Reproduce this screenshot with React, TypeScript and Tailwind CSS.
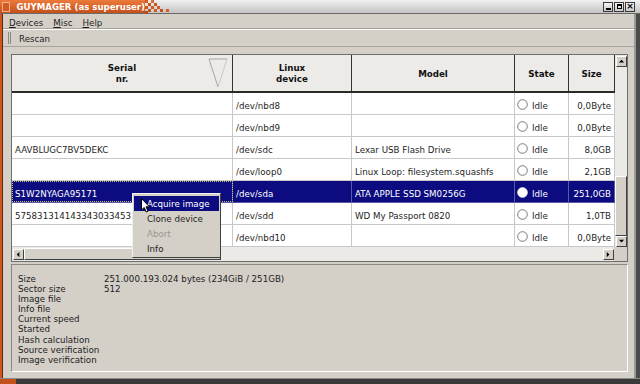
import React from "react";

const rows = [
  { serial: "", dev: "/dev/nbd8", model: "", size: "0,0Byte" },
  { serial: "", dev: "/dev/nbd9", model: "", size: "0,0Byte" },
  { serial: "AAVBLUGC7BV5DEKC", dev: "/dev/sdc", model: "Lexar USB Flash Drive", size: "8,0GB" },
  { serial: "", dev: "/dev/loop0", model: "Linux Loop: filesystem.squashfs", size: "2,1GB" },
  { serial: "S1W2NYAGA95171", dev: "/dev/sda", model: "ATA APPLE SSD SM0256G", size: "251,0GB", sel: true },
  { serial: "575831314143343033453", dev: "/dev/sdd", model: "WD My Passport 0820", size: "1,0TB" },
  { serial: "", dev: "/dev/nbd10", model: "", size: "0,0Byte" },
];

const info = [
  ["Size", "251.000.193.024 bytes (234GiB / 251GB)"],
  ["Sector size", "512"],
  ["Image file", ""],
  ["Info file", ""],
  ["Current speed", ""],
  ["Started", ""],
  ["Hash calculation", ""],
  ["Source verification", ""],
  ["Image verification", ""],
];

function Radio({ filled }: { filled?: boolean }) {
  return (
    <svg width="11" height="11" viewBox="0 0 11 11" className="shrink-0 mt-[2px]">
      <circle cx="5.5" cy="5.5" r="4.8" fill="#ffffff" stroke={filled ? "#ffffff" : "#6a6a6a"} strokeWidth="0.9" />
    </svg>
  );
}

function WinBtn({ children }: { children: React.ReactNode }) {
  return (
    <div className="w-[10px] h-[10px] border border-[#3a3a3a] bg-gradient-to-b from-[#f4f4f4] to-[#c8c8c8] flex items-center justify-center">
      {children}
    </div>
  );
}

function ArrowBtn({ dir }: { dir: "up" | "down" | "left" | "right" }) {
  const pts =
    dir === "up" ? "1,5 4,2 7,5" : dir === "down" ? "1,2 4,5 7,2" : dir === "left" ? "5,1 2,4 5,7" : "2,1 5,4 2,7";
  return (
    <div className="w-[11px] h-[11px] bg-[#d4d0c8] border border-t-white border-l-white border-r-[#404040] border-b-[#404040] flex items-center justify-center shrink-0">
      <svg width="7" height="7" viewBox="0 0 8 8">
        <polygon points={pts} fill="#000" />
      </svg>
    </div>
  );
}

export default function App() {
  return (
    <div className="w-[640px] h-[384px] overflow-hidden relative bg-[#303030] flex flex-col font-['DejaVu_Sans',sans-serif] text-[8.7px] text-[#1e1e1e]">
      {/* Title bar */}
      <div className="h-[14px] flex shrink-0 bg-gradient-to-b from-[#f0f0f0] to-[#c4c4c4] border-b border-[#6a6a6a]">
        <div className="w-[145px] flex items-center bg-gradient-to-b from-[#ec7a3c] to-[#c4501a] pl-[2px]">
          <div className="w-[10px] h-[10px] border border-[#f7b08a] bg-[#d45a22]" />
          <span className="ml-[6px] mt-[2px] font-bold text-white text-[8.6px] leading-none whitespace-nowrap">GUYMAGER (as superuser)</span>
        </div>
        <svg width="28" height="14" viewBox="0 0 28 14" className="shrink-0">
          <rect x="0" y="0" width="3" height="3" fill="#d45a22" />
          <rect x="3" y="3" width="3" height="3" fill="#c4501a" />
          <rect x="0" y="6" width="3" height="3" fill="#c95520" />
          <rect x="6" y="0" width="3" height="3" fill="#e06a30" />
          <rect x="6" y="6" width="3" height="3" fill="#d45a22" />
          <rect x="9" y="3" width="3" height="3" fill="#cc5520" />
          <rect x="12" y="6" width="3" height="3" fill="#d65c24" />
          <rect x="15" y="9" width="3" height="3" fill="#c4501a" />
          <rect x="9" y="9" width="3" height="3" fill="#d45a22" />
          <rect x="21" y="9" width="3" height="3" fill="#d86028" />
          <rect x="3" y="9" width="3" height="3" fill="#c4501a" />
          <rect x="0" y="11" width="3" height="3" fill="#b84a18" />
        </svg>
        <div className="flex-1" />
        <div className="flex items-center gap-[1px] pr-[5px]">
          <WinBtn>
            <div className="w-[5px] h-[2px] bg-black mt-[4px]" />
          </WinBtn>
          <WinBtn>
            <div className="w-[5px] h-[5px] border border-black border-t-2" />
          </WinBtn>
          <WinBtn>
            <span className="text-[9px] font-bold leading-none text-black">×</span>
          </WinBtn>
        </div>
      </div>

      {/* Window body */}
      <div className="flex flex-1 min-h-0">
        <div className="w-[3px] bg-[#d0561e] border-r border-[#5a2a10] shrink-0" />
        <div className="flex-1 bg-[#d4d0c8] flex flex-col min-w-0">
          {/* Menu bar */}
          <div className="h-[15px] flex items-center gap-[10px] pl-[6px] pt-[5px] border-b border-[#a8a49c] shrink-0">
            <span><u>D</u>evices</span>
            <span><u>M</u>isc</span>
            <span><u>H</u>elp</span>
          </div>
          {/* Toolbar */}
          <div className="h-[18px] flex items-center pt-[4px] border-t border-white border-b border-b-[#a8a49c] shrink-0">
            <div className="ml-[5px] -mt-[4px] h-[12px] w-[3px] border-l border-r border-[#8c887f]" />
            <span className="ml-[8px]">Rescan</span>
          </div>

          {/* Table */}
          <div className="mt-[7px] ml-[8px] mr-[6px] h-[208px] border border-[#6e6e6e] bg-white flex flex-col shrink-0">
            <div className="flex h-[192px]">
              <div className="w-[603px] flex flex-col">
                {/* Header */}
                <div className="h-[38px] flex bg-[#ecebe7] border-b-2 border-[#2a2a2a] font-bold text-[#111] text-center leading-[11px] shrink-0">
                  <div className="w-[221px] relative flex items-center justify-center pt-[2px] border-r border-[#333]">
                    <div>Serial<br />nr.</div>
                    <svg width="20" height="30" viewBox="0 0 20 30" className="absolute right-[4px] top-[3px]">
                      <polyline points="10,29 1,1 19,1" fill="none" stroke="#a4a4a4" strokeWidth="1" />
                      <line x1="10" y1="29" x2="19" y2="1" stroke="#c8c8c8" strokeWidth="1" />
                    </svg>
                  </div>
                  <div className="w-[119px] flex items-center justify-center pt-[2px] border-r border-[#333]">
                    <div>Linux<br />device</div>
                  </div>
                  <div className="w-[163px] flex items-center justify-center pt-[2px] border-r border-[#333]">Model</div>
                  <div className="w-[54px] flex items-center justify-center pt-[2px] border-r border-[#333]">State</div>
                  <div className="w-[46px] flex items-center justify-center pt-[2px] border-r border-[#333]">Size</div>
                </div>
                {/* Rows */}
                {rows.map((r, i) => {
                  const sel = !!r.sel;
                  const base = sel ? "bg-[#0c0c80] text-white" : "bg-white";
                  const line = sel ? "border-[#5a5aa0]" : "border-[#c8c8c8]";
                  return (
                    <div key={i} className={`h-[22px] flex shrink-0 border-b ${line} ${base}`}>
                      <div className={`w-[221px] flex items-center pt-[6px] pl-[3px] border-r ${line} overflow-hidden whitespace-nowrap ${sel ? "outline outline-1 outline-dotted outline-[#c8c070] -outline-offset-1" : ""}`}>
                        {r.serial}
                      </div>
                      <div className={`w-[119px] flex items-center pt-[6px] pl-[3px] border-r ${line} whitespace-nowrap`}>{r.dev}</div>
                      <div className={`w-[163px] flex items-center pt-[6px] pl-[3px] border-r ${line} whitespace-nowrap overflow-hidden`}>{r.model}</div>
                      <div className={`w-[54px] flex items-center pl-[2px] gap-[4px] border-r ${line}`}>
                        <Radio filled={sel} />
                        <span className="pt-[6px]">Idle</span>
                      </div>
                      <div className={`w-[46px] flex items-center justify-end pt-[6px] pr-[3px] border-r ${line} whitespace-nowrap`}>{r.size}</div>
                    </div>
                  );
                })}
              </div>
              {/* Vertical scrollbar */}
              <div className="w-[13px] flex flex-col bg-[#eceae6] items-center pt-[1px]">
                <ArrowBtn dir="up" />
                <div className="flex-1 w-full flex flex-col">
                  <div className="h-[109px]" />
                  <div className="flex-1 bg-[#d4d0c8] border border-t-white border-l-white border-r-[#404040] border-b-[#404040]" />
                </div>
                <ArrowBtn dir="down" />
              </div>
            </div>
            {/* Horizontal scrollbar */}
            <div className="flex h-[14px] shrink-0">
              <div className="w-[603px] flex items-center bg-[#eceae6] pl-[1px]">
                <ArrowBtn dir="left" />
                <div className="w-[197px] h-[12px] bg-[#d4d0c8] border border-t-white border-l-white border-r-[#404040] border-b-[#404040]" />
                <div className="flex-1" />
                <ArrowBtn dir="right" />
              </div>
              <div className="w-[13px] bg-[#d4d0c8]" />
            </div>
          </div>

          {/* Info panel */}
          <div className="mt-[2px] ml-[8px] mr-[6px] h-[108px] border border-t-[#8c887f] border-l-[#8c887f] border-r-white border-b-white pt-[9px] pl-[6px] text-[#222] leading-[10.1px] shrink-0">
            {info.map(([k, v]) => (
              <div key={k} className="flex">
                <span className="w-[86px]">{k}</span>
                <span>{v}</span>
              </div>
            ))}
          </div>
          <div className="flex-1" />
        </div>
        <div className="w-[6px] shrink-0 flex">
          <div className="w-[2px] bg-[#9a9a9a]" />
          <div className="flex-1 bg-[#4a4a4a]" />
        </div>
      </div>
      <div className="h-[6px] shrink-0 flex bg-[#3a3a3a] border-t border-[#8a8a8a]">
        <div className="w-[16px] bg-[#c4501a]" />
      </div>

      {/* Context menu */}
      <div className="absolute left-[132px] top-[193px] w-[89px] h-[65px] bg-[#d4d0c8] border border-t-[#f0f0f0] border-l-[#f0f0f0] border-r-[#404040] border-b-[#404040] pt-[2px] px-[1px]">
        <div className="h-[15px] flex items-center pt-[2px] pl-[13px] bg-[#0c0c80] text-white">Acquire image</div>
        <div className="h-[15px] flex items-center pt-[2px] pl-[13px]">Clone device</div>
        <div className="h-[15px] flex items-center pt-[2px] pl-[13px] text-[#9a968e]">Abort</div>
        <div className="h-[15px] flex items-center pt-[2px] pl-[13px]">Info</div>
      </div>
      {/* Mouse cursor */}
      <svg width="10" height="16" viewBox="0 0 10 16" className="absolute left-[141px] top-[198px]">
        <polygon points="0.5,0.5 0.5,12 3.2,9.5 5.2,14 7,13.2 5,8.8 8.5,8.8" fill="#ffffff" stroke="#000000" strokeWidth="1" strokeLinejoin="round" />
      </svg>
    </div>
  );
}
